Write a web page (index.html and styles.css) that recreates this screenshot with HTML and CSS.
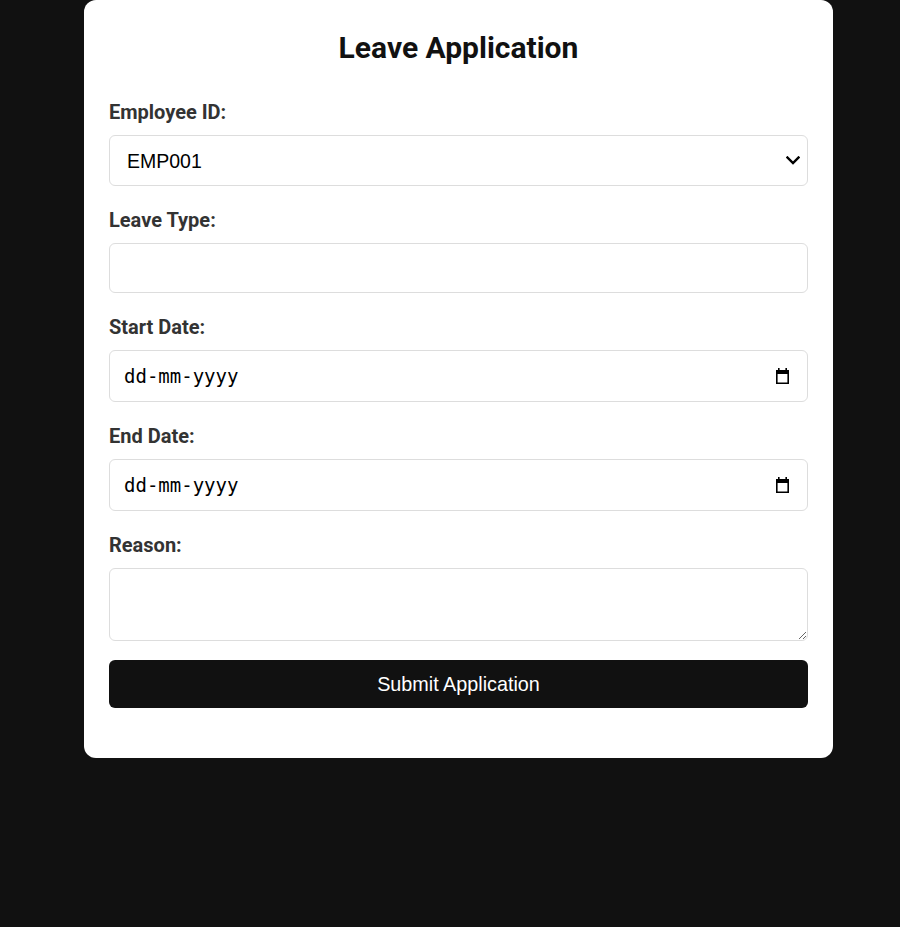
FILE: index.html
```html
<!DOCTYPE html>
<html lang="en">
<head>
<meta charset="utf-8">
<title>Leave Application</title>
<link rel="stylesheet" href="styles.css">
</head>
<body>
<div class="card">
  <h2 class="title">Leave Application</h2>
  <form class="form">
    <div class="group">
      <label class="label" for="emp">Employee ID:</label>
      <div class="control">
        <select id="emp" class="field field-select">
          <option>EMP001</option>
        </select>
        <svg class="chevron" width="14" height="9" viewBox="0 0 14 9" aria-hidden="true">
          <polyline points="1.5,1.5 7,7 12.5,1.5" fill="none" stroke="#000" stroke-width="2.4" stroke-linecap="square"/>
        </svg>
      </div>
    </div>
    <div class="group">
      <label class="label" for="type">Leave Type:</label>
      <input id="type" class="field field-text" type="text">
    </div>
    <div class="group">
      <label class="label" for="start">Start Date:</label>
      <div class="control">
        <input id="start" class="field field-date" type="text" placeholder="dd-mm-yyyy">
        <svg class="cal" width="15" height="16" viewBox="0 0 15 16" aria-hidden="true">
          <rect x="3" y="0" width="1.6" height="3" fill="#000"/>
          <rect x="10.4" y="0" width="1.6" height="3" fill="#000"/>
          <path d="M1 2H14V16H1Z M2.6 6H12.4V14.4H2.6Z" fill="#000" fill-rule="evenodd"/>
        </svg>
      </div>
    </div>
    <div class="group">
      <label class="label" for="end">End Date:</label>
      <div class="control">
        <input id="end" class="field field-date" type="text" placeholder="dd-mm-yyyy">
        <svg class="cal" width="15" height="16" viewBox="0 0 15 16" aria-hidden="true">
          <rect x="3" y="0" width="1.6" height="3" fill="#000"/>
          <rect x="10.4" y="0" width="1.6" height="3" fill="#000"/>
          <path d="M1 2H14V16H1Z M2.6 6H12.4V14.4H2.6Z" fill="#000" fill-rule="evenodd"/>
        </svg>
      </div>
    </div>
    <div class="group group-last">
      <label class="label" for="reason">Reason:</label>
      <textarea id="reason" class="field field-area"></textarea>
    </div>
    <button type="button" class="submit">Submit Application</button>
  </form>
</div>
</body>
</html>
```
FILE: styles.css
```css
html, body {
  margin: 0;
  padding: 0;
  background: #111111;
}
body {
  font-family: Roboto, "Liberation Sans", sans-serif;
}
.card {
  box-sizing: border-box;
  width: 749px;
  margin-left: 84px;
  background: #ffffff;
  border-radius: 12px;
  padding: 25px 25px 50px;
}
.title {
  margin: 5px 0 34px;
  font-size: 30px;
  line-height: 36px;
  font-weight: 700;
  text-align: center;
  color: #111111;
}
.form {
  display: flex;
  flex-direction: column;
}
.group {
  display: flex;
  flex-direction: column;
  margin-bottom: 22px;
}
.group-last {
  margin-bottom: 19px;
}
.label {
  font-size: 20px;
  line-height: 24px;
  font-weight: 700;
  color: #333333;
  margin-bottom: 11px;
}
.control {
  position: relative;
}
.field {
  display: block;
  box-sizing: border-box;
  width: 100%;
  margin: 0;
  border: 1px solid #dddddd;
  border-radius: 6px;
  padding: 0 14px;
  font-family: "Liberation Sans", Arial, sans-serif;
  font-size: 18px;
  color: #000000;
  background: #ffffff;
  outline: none;
}
.field-select {
  -webkit-appearance: none;
  appearance: none;
  height: 51px;
  padding: 0 17px;
  font-size: 19.5px;
}
.chevron {
  position: absolute;
  right: 8px;
  top: 21px;
  pointer-events: none;
}
.field-text {
  height: 50px;
}
.field-date {
  height: 52px;
  font-family: "DejaVu Sans Mono", monospace;
  font-size: 19px;
}
.field-date::placeholder {
  color: #000000;
  opacity: 1;
}
.cal {
  position: absolute;
  right: 18px;
  top: 18px;
  pointer-events: none;
}
.field-area {
  height: 73px;
  padding: 14px;
  resize: vertical;
}
.submit {
  height: 48px;
  border: none;
  border-radius: 6px;
  background: #111111;
  color: #ffffff;
  font-family: "Liberation Sans", Arial, sans-serif;
  font-size: 19.8px;
  cursor: pointer;
}
```
